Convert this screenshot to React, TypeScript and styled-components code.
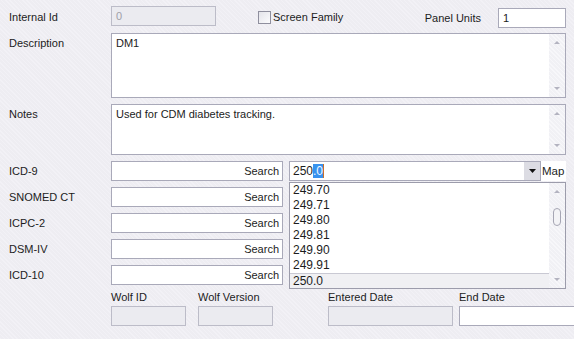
import React, { FC } from 'react'
import styled, { createGlobalStyle } from 'styled-components'

const GlobalStyle = createGlobalStyle`
  html, body {
    margin: 0;
    padding: 0;
  }
  body {
    width: 574px;
    height: 339px;
    overflow: hidden;
    font-family: "Liberation Sans", Arial, sans-serif;
    font-size: 11px;
    color: #1c1c1c;
    background-color: #eeedf2;
    background-image: repeating-linear-gradient(45deg, #f2f1f6 0 1px, transparent 1px 3px);
  }
`;

const codeRows = ['SNOMED CT', 'ICPC-2', 'DSM-IV', 'ICD-10'];
const listItems = ['249.70', '249.71', '249.80', '249.81', '249.90', '249.91', '250.0'];

const ScrollBar: FC<{ thumb?: boolean }> = ({ thumb = false }) => (
  <Track>
    <Arrow up />
    {thumb && <Thumb />}
    <TrackFill />
    <Arrow />
  </Track>
);

const App: FC = () => {
  return (
    <>
      <GlobalStyle />
      <Form>
        <TopRow>
          <Label>Internal Id</Label>
          <Field width={105} disabled>0</Field>
          <CheckWrap>
            <CheckBox />
            <span>Screen Family</span>
          </CheckWrap>
          <PanelUnits>
            <span>Panel Units</span>
            <Field width={68} offset={2}>1</Field>
          </PanelUnits>
        </TopRow>

        <AreaRow height={65}>
          <Label top={4}>Description</Label>
          <TextArea>
            <AreaText>DM1</AreaText>
            <ScrollBar />
          </TextArea>
        </AreaRow>

        <AreaRow height={51}>
          <Label top={4}>Notes</Label>
          <TextArea>
            <AreaText>Used for CDM diabetes tracking.</AreaText>
            <ScrollBar />
          </TextArea>
        </AreaRow>

        <CodesSection>
          <CodeRow>
            <Label top={4}>ICD-9</Label>
            <SearchField>Search</SearchField>
            <ComboWrap>
              <Combo>
                <ComboText>
                  250<Selected>.0</Selected><Caret />
                </ComboText>
                <DropButton>
                  <svg width="7" height="4" viewBox="0 0 7 4">
                    <path d="M0 0h7L3.5 4z" fill="#111" />
                  </svg>
                </DropButton>
              </Combo>
              <MapLabel>Map</MapLabel>
              <DropList>
                <Items>
                  {listItems.map((item, i) => (
                    <Item key={item} active={i === listItems.length - 1}>{item}</Item>
                  ))}
                </Items>
                <ScrollBar thumb />
              </DropList>
            </ComboWrap>
          </CodeRow>
          {codeRows.map(name => (
            <CodeRow key={name}>
              <Label top={4}>{name}</Label>
              <SearchField>Search</SearchField>
            </CodeRow>
          ))}
        </CodesSection>

        <BottomRow>
          <Group width={75}>
            <SmallLabel>Wolf ID</SmallLabel>
            <BottomField disabled />
          </Group>
          <Group width={75} gap={12}>
            <SmallLabel>Wolf Version</SmallLabel>
            <BottomField disabled />
          </Group>
          <Group width={125} gap={55}>
            <SmallLabel>Entered Date</SmallLabel>
            <BottomField disabled />
          </Group>
          <Group width={125} gap={6}>
            <SmallLabel>End Date</SmallLabel>
            <BottomField />
          </Group>
        </BottomRow>
      </Form>
    </>
  );
};

export default App;

const Form = styled.div`
  display: flex;
  flex-direction: column;
  padding: 6px 8px 0 9px;
  width: 574px;
  box-sizing: border-box;
`;

const TopRow = styled.div`
  display: flex;
  align-items: flex-start;
  height: 21px;
`;

const Label = styled.div<{ top?: number }>`
  width: 102px;
  flex-shrink: 0;
  padding-top: ${({ top = 5 }) => top}px;
  line-height: 13px;
`;

const Field = styled.div<{ width: number; disabled?: boolean; offset?: number }>`
  width: ${({ width }) => width}px;
  height: 20px;
  box-sizing: border-box;
  margin-top: ${({ offset = 0 }) => offset}px;
  padding: 3px 4px 0;
  line-height: 13px;
  border: 1px solid ${({ disabled }) => disabled ? '#bcbcc8' : '#a9a9b9'};
  background: ${({ disabled }) => disabled ? '#ebebf0' : '#fff'};
  color: ${({ disabled }) => disabled ? '#a0a0a8' : '#1c1c1c'};
`;

const CheckWrap = styled.div`
  display: flex;
  align-items: center;
  gap: 2px;
  margin-left: 42px;
  margin-top: 5px;
  line-height: 13px;
`;

const CheckBox = styled.div`
  width: 13px;
  height: 13px;
  box-sizing: border-box;
  border: 1px solid #8f8f9e;
  background: linear-gradient(135deg, #e4e4ea, #fbfbfd);
`;

const PanelUnits = styled.div`
  display: flex;
  align-items: flex-start;
  gap: 17px;
  margin-left: auto;

  > span {
    padding-top: 6px;
    line-height: 13px;
  }
`;

const AreaRow = styled.div<{ height: number }>`
  display: flex;
  height: ${({ height }) => height}px;
  margin-top: 6px;
`;

const TextArea = styled.div`
  flex: 1;
  display: flex;
  border: 1px solid #a9a9b9;
  background: #fff;
`;

const AreaText = styled.div`
  flex: 1;
  padding: 3px 4px;
  line-height: 13px;
`;

const Track = styled.div`
  width: 16px;
  display: flex;
  flex-direction: column;
  align-items: center;
  background-color: #f1f1f5;
  background-image: repeating-linear-gradient(45deg, #f7f7fa 0 1px, transparent 1px 3px);
`;

const TrackFill = styled.div`
  flex: 1;
`;

const Arrow = styled.div<{ up?: boolean }>`
  width: 0;
  height: 0;
  margin: 7px 0;
  border-left: 3px solid transparent;
  border-right: 3px solid transparent;
  ${({ up }) => up ? 'border-bottom: 3px solid #b3b3c0;' : 'border-top: 3px solid #b3b3c0;'}
`;

const Thumb = styled.div`
  width: 6px;
  height: 16px;
  margin-top: 8px;
  border: 1px solid #a6a6b4;
  border-radius: 4px;
  background: #f3f3f6;
`;

const CodesSection = styled.div`
  display: flex;
  flex-direction: column;
  gap: 6px;
  margin-top: 6px;
`;

const CodeRow = styled.div`
  display: flex;
  height: 20px;
`;

const SearchField = styled.div`
  width: 172px;
  height: 20px;
  box-sizing: border-box;
  border: 1px solid #a9a9b9;
  background: #fff;
  text-align: right;
  padding: 3px 3px 0 0;
  line-height: 13px;
`;

const ComboWrap = styled.div`
  position: relative;
  flex: 1;
  display: flex;
  margin-left: 6px;
`;

const Combo = styled.div`
  flex: 1;
  display: flex;
  border: 1px solid #a9a9b9;
  background: #fff;
`;

const ComboText = styled.div`
  flex: 1;
  display: flex;
  align-items: center;
  padding-left: 3px;
  font-size: 12px;
`;

const Selected = styled.span`
  background: #3892ee;
  color: #f4f8ff;
  line-height: 14px;
`;

const Caret = styled.span`
  width: 1px;
  height: 14px;
  background: #c8702a;
`;

const DropButton = styled.div`
  width: 16px;
  display: flex;
  align-items: center;
  justify-content: center;
  background: #dcdce3;
`;

const MapLabel = styled.div`
  width: 25px;
  background: #fff;
  padding: 3px 0 0 1px;
  box-sizing: border-box;
  font-size: 11.5px;
  line-height: 14px;
  white-space: nowrap;
  overflow: hidden;
`;

const DropList = styled.div`
  position: absolute;
  top: 21px;
  left: 0;
  right: 0;
  height: 105px;
  display: flex;
  border: 1px solid #9c9cab;
  background: #fff;
  z-index: 2;
`;

const Items = styled.div`
  flex: 1;
  display: flex;
  flex-direction: column;
  font-size: 12px;
`;

const Item = styled.div<{ active?: boolean }>`
  height: 15px;
  line-height: 15px;
  padding-left: 3px;
  box-sizing: border-box;
  background: ${({ active }) => active ? '#f0f0f3' : 'transparent'};
  border-top: ${({ active }) => active ? '1px solid #c9c9d3' : 'none'};
`;

const BottomRow = styled.div`
  display: flex;
  margin-top: 6px;
  padding-left: 102px;
`;

const Group = styled.div<{ width: number; gap?: number }>`
  display: flex;
  flex-direction: column;
  flex-shrink: 0;
  width: ${({ width }) => width}px;
  margin-left: ${({ gap = 0 }) => gap}px;
`;

const SmallLabel = styled.div`
  line-height: 13px;
  height: 15px;
`;

const BottomField = styled.div<{ disabled?: boolean }>`
  height: 20px;
  box-sizing: border-box;
  border: 1px solid ${({ disabled }) => disabled ? '#bcbcc8' : '#a9a9b9'};
  background: ${({ disabled }) => disabled ? '#ebebf0' : '#fff'};
`;
